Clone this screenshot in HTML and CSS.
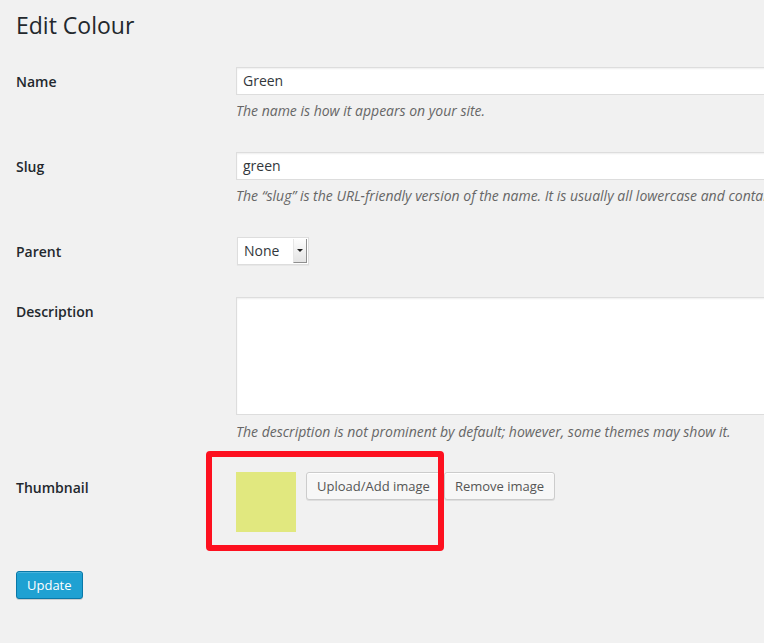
FILE: index.html
```html
<!DOCTYPE html>
<html>
<head>
<meta charset="utf-8">
<link rel="stylesheet" href="styles.css">
</head>
<body>
<div class="wrap">
  <h1 class="title">Edit Colour</h1>
  <form class="form">
    <div class="row">
      <label class="label">Name</label>
      <div class="field">
        <div class="input">Green</div>
        <p class="desc">The name is how it appears on your site.</p>
      </div>
    </div>
    <div class="row">
      <label class="label">Slug</label>
      <div class="field">
        <div class="input">green</div>
        <p class="desc">The “slug” is the URL-friendly version of the name. It is usually all lowercase and contains only letters, numbers, and hyphens.</p>
      </div>
    </div>
    <div class="row row-parent">
      <label class="label">Parent</label>
      <div class="field">
        <div class="select"><span class="select-text">None</span><span class="select-arrow"></span></div>
      </div>
    </div>
    <div class="row">
      <label class="label">Description</label>
      <div class="field">
        <div class="textarea"></div>
        <p class="desc desc-ta">The description is not prominent by default; however, some themes may show it.</p>
      </div>
    </div>
    <div class="row row-thumb">
      <label class="label label-thumb">Thumbnail</label>
      <div class="field thumb">
        <div class="swatch"></div>
        <button type="button" class="btn btn-upload">Upload/Add image</button>
        <button type="button" class="btn">Remove image</button>
      </div>
    </div>
    <div class="submit">
      <button type="button" class="btn-primary">Update</button>
    </div>
  </form>
  <div class="highlight"></div>
</div>
</body>
</html>
```

FILE: styles.css
```css
html, body {
  margin: 0;
  padding: 0;
  background: #f1f1f1;
  overflow: hidden;
}
body {
  font-family: "Open Sans", "Noto Sans", sans-serif;
  color: #23282d;
  font-size: 13px;
}
.wrap {
  position: relative;
  padding-left: 16px;
  width: 748px;
  height: 643px;
  overflow: hidden;
}
.title {
  margin: 0;
  padding-top: 10px;
  font-size: 23px;
  line-height: 31px;
  font-weight: 400;
  color: #23282d;
}
.form {
  margin-top: 10px;
}
.row {
  display: grid;
  grid-template-columns: 220px 1fr;
  padding: 16px 0;
}
.row-parent {
  padding-bottom: 15px;
}
.row-thumb {
  padding-top: 15px;
}
.label {
  font-size: 14px;
  font-weight: 600;
  line-height: 29px;
  color: #23282d;
}
.label-thumb {
  line-height: 32px;
}
.field {
  min-width: 0;
  overflow: hidden;
}
.input {
  box-sizing: border-box;
  width: 600px;
  height: 28px;
  background: #fff;
  border: 1px solid #ddd;
  box-shadow: inset 0 1px 2px rgba(0,0,0,.07);
  padding: 0 6px;
  font-size: 14px;
  line-height: 26px;
  color: #32373c;
}
.desc {
  margin: 6px 0 0;
  font-size: 14px;
  line-height: 19px;
  font-style: italic;
  color: #666;
  white-space: nowrap;
}
.desc-ta {
  margin-top: 7px;
}
.select {
  box-sizing: border-box;
  display: flex;
  align-items: stretch;
  width: 72px;
  height: 28px;
  margin-left: 1px;
  background: #fff;
  border: 1px solid #ddd;
  box-shadow: 0 1px 1px rgba(0,0,0,.04);
}
.select-text {
  flex: 1;
  padding-left: 6px;
  font-size: 14px;
  line-height: 26px;
  color: #32373c;
}
.select-arrow {
  position: relative;
  width: 12px;
  margin: 1px 1px 1px 0;
  background: linear-gradient(#fdfdfd, #e4e4e4);
  border-left: 1px solid #e6e6e6;
  border-right: 1px solid #8f8f8f;
  border-bottom: 1px solid #8f8f8f;
}
.select-arrow::after {
  content: "";
  position: absolute;
  left: 3px;
  top: 10px;
  border-left: 3px solid transparent;
  border-right: 3px solid transparent;
  border-top: 3px solid #222;
}
.textarea {
  box-sizing: border-box;
  width: 600px;
  height: 118px;
  background: #fff;
  border: 1px solid #ddd;
  box-shadow: inset 0 1px 2px rgba(0,0,0,.07);
}
.thumb {
  display: flex;
  align-items: flex-start;
}
.swatch {
  width: 60px;
  height: 60px;
  background: #e1e87f;
  margin-right: 10px;
}
.btn {
  box-sizing: border-box;
  height: 28px;
  padding: 0 10px;
  margin: 0 3px 0 0;
  background: #f7f7f7;
  border: 1px solid #ccc;
  border-radius: 3px;
  box-shadow: inset 0 1px 0 #fff, 0 1px 0 rgba(0,0,0,.08);
  font-family: "Open Sans", "Noto Sans", sans-serif;
  font-size: 13px;
  line-height: 26px;
  color: #555;
}
.submit {
  padding-top: 23px;
}
.btn-primary {
  box-sizing: border-box;
  height: 28px;
  padding: 0 10px;
  margin: 0;
  background: #1fa1d2;
  border: 1px solid #0a78a8;
  border-radius: 3px;
  box-shadow: inset 0 1px 0 rgba(120,200,230,.5), 0 1px 0 rgba(0,0,0,.15);
  font-family: "Open Sans", "Noto Sans", sans-serif;
  font-size: 13px;
  line-height: 26px;
  color: #fff;
}
.highlight {
  position: absolute;
  left: 206px;
  top: 451px;
  width: 238px;
  height: 100px;
  box-sizing: border-box;
  border: 6px solid #fd101f;
  border-radius: 4px;
}
```
